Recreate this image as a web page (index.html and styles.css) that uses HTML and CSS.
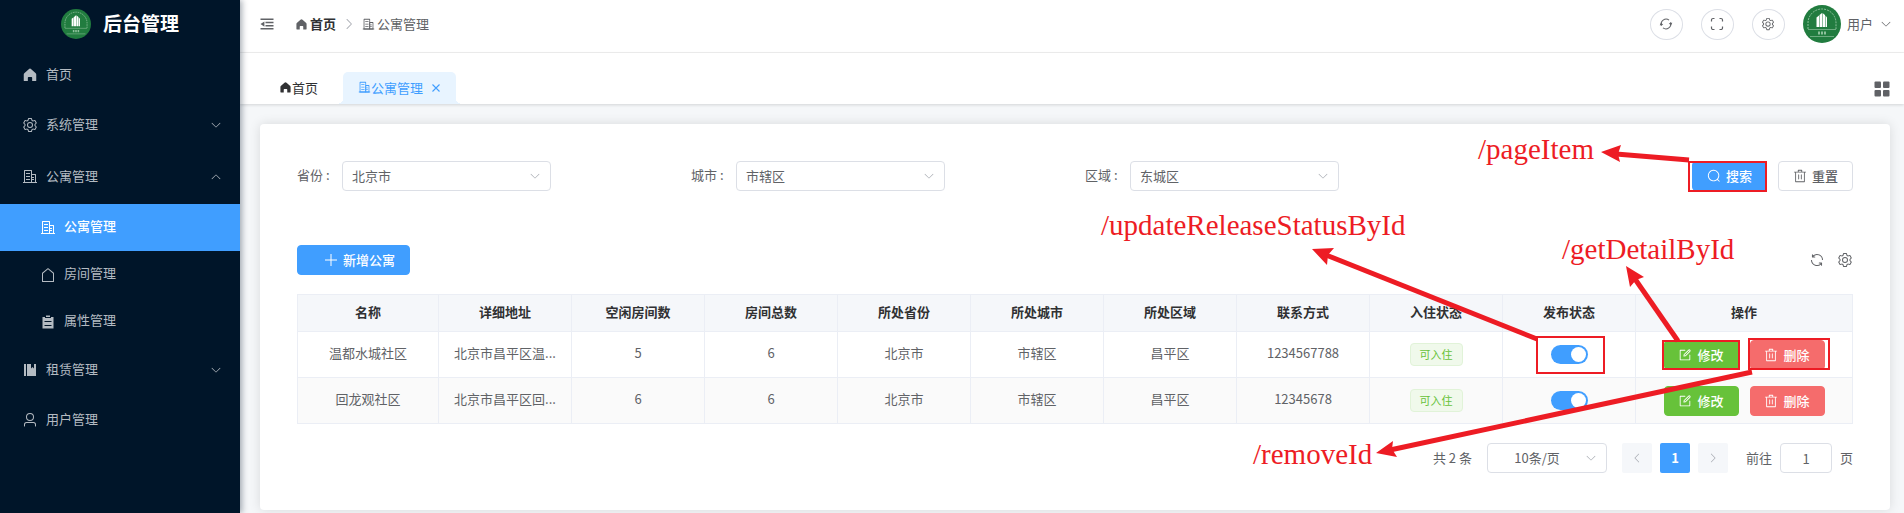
FILE: index.html
```html
<!DOCTYPE html>
<html lang="zh-CN">
<head>
<meta charset="utf-8">
<title>后台管理</title>
<link rel="stylesheet" href="styles.css">
</head>
<body>
<svg class="sprite" aria-hidden="true">
  <symbol id="i-home" viewBox="0 0 1024 1024"><path d="M512 96c30 0 50 14 80 40l270 240c34 32 50 60 50 100v388c0 22-12 36-36 36H650V680c0-30-16-46-46-46H420c-30 0-46 16-46 46v220H148c-24 0-36-14-36-36V476c0-40 16-68 50-100l270-240c30-26 50-40 80-40z"/></symbol>
  <symbol id="i-setting" viewBox="0 0 1024 1024"><path d="M600.704 64a32 32 0 0 1 30.464 22.208l35.2 109.376c14.784 7.232 28.928 15.36 42.432 24.512l112.384-24.192a32 32 0 0 1 34.432 15.36L944.32 364.8a32 32 0 0 1-4.032 37.504l-77.12 85.12a357.12 357.12 0 0 1 0 49.024l77.12 85.248a32 32 0 0 1 4.032 37.504l-88.704 153.6a32 32 0 0 1-34.432 15.296L708.8 803.904c-13.44 9.088-27.648 17.28-42.368 24.512l-35.264 109.376A32 32 0 0 1 600.704 960H423.296a32 32 0 0 1-30.464-22.208L357.696 828.48a351.616 351.616 0 0 1-42.56-24.64l-112.32 24.256a32 32 0 0 1-34.432-15.36L79.68 659.2a32 32 0 0 1 4.032-37.504l77.12-85.248a357.12 357.12 0 0 1 0-48.896l-77.12-85.248A32 32 0 0 1 79.68 364.8l88.704-153.6a32 32 0 0 1 34.432-15.296l112.32 24.256c13.568-9.152 27.776-17.408 42.56-24.64l35.2-109.312A32 32 0 0 1 423.232 64H600.64zm-23.424 64H446.72l-36.352 113.088-24.512 11.968a294.113 294.113 0 0 0-34.816 20.096l-22.656 15.36-116.224-25.088-65.28 113.152 79.68 88.192-1.92 27.136a293.12 293.12 0 0 0 0 40.192l1.92 27.136-79.808 88.192 65.344 113.152 116.224-25.024 22.656 15.296a294.113 294.113 0 0 0 34.816 20.096l24.512 11.968L446.72 896h130.688l36.48-113.152 24.448-11.904a288.282 288.282 0 0 0 34.752-20.096l22.592-15.296 116.288 25.024 65.28-113.152-79.744-88.192 1.92-27.136a293.12 293.12 0 0 0 0-40.256l-1.92-27.136 79.808-88.128-65.344-113.152-116.288 24.96-22.592-15.232a287.616 287.616 0 0 0-34.752-20.096l-24.448-11.904L577.344 128zM512 320a192 192 0 1 1 0 384 192 192 0 0 1 0-384zm0 64a128 128 0 1 0 0 256 128 128 0 0 0 0-256z"/></symbol>
  <symbol id="i-office" viewBox="0 0 1024 1024"><path d="M192 128v704h384V128H192zm-32-64h448a32 32 0 0 1 32 32v768a32 32 0 0 1-32 32H160a32 32 0 0 1-32-32V96a32 32 0 0 1 32-32z"/><path d="M256 256h256v64H256v-64zm0 192h256v64H256v-64zm0 192h256v64H256v-64zm384-128h128v64H640v-64zm0 128h128v64H640v-64zM64 832h896v64H64v-64z"/><path d="M640 384v448h192V384H640zm-32-64h256a32 32 0 0 1 32 32v512a32 32 0 0 1-32 32H608a32 32 0 0 1-32-32V352a32 32 0 0 1 32-32z"/></symbol>
  <symbol id="i-house" viewBox="0 0 1024 1024"><path d="M192 413.952V896h640V413.952L512 147.328 192 413.952zM139.52 374.4l352-293.312a32 32 0 0 1 40.96 0l352 293.312A32 32 0 0 1 896 398.976V928a32 32 0 0 1-32 32H160a32 32 0 0 1-32-32V398.976a32 32 0 0 1 11.52-24.576z"/></symbol>
  <symbol id="i-list" viewBox="0 0 1024 1024"><path d="M704 192h160v736H160V192h160v64h384v-64zM288 512h448v-64H288v64zm0 256h448v-64H288v64zm96-576V96h256v96H384z"/></symbol>
  <symbol id="i-book" viewBox="0 0 1024 1024"><path d="M576 128v288l96-96 96 96V128h128v768H320V128h256zm-448 0h128v768H128V128z"/></symbol>
  <symbol id="i-user" viewBox="0 0 1024 1024"><path d="M512 512a192 192 0 1 0 0-384 192 192 0 0 0 0 384zm0 64a256 256 0 1 1 0-512 256 256 0 0 1 0 512zm320 320v-96a96 96 0 0 0-96-96H288a96 96 0 0 0-96 96v96a32 32 0 1 1-64 0v-96a160 160 0 0 1 160-160h448a160 160 0 0 1 160 160v96a32 32 0 1 1-64 0z"/></symbol>
  <symbol id="i-down" viewBox="0 0 1024 1024"><path d="M831.872 340.864 512 652.672 192.128 340.864a30.592 30.592 0 0 0-42.752 0 29.12 29.12 0 0 0 0 41.6L489.664 714.24a32 32 0 0 0 44.672 0l340.288-331.712a29.12 29.12 0 0 0 0-41.728 30.592 30.592 0 0 0-42.752 0z"/></symbol>
  <symbol id="i-up" viewBox="0 0 1024 1024"><path transform="rotate(180 512 512)" d="M831.872 340.864 512 652.672 192.128 340.864a30.592 30.592 0 0 0-42.752 0 29.12 29.12 0 0 0 0 41.6L489.664 714.24a32 32 0 0 0 44.672 0l340.288-331.712a29.12 29.12 0 0 0 0-41.728 30.592 30.592 0 0 0-42.752 0z"/></symbol>
  <symbol id="i-right" viewBox="0 0 1024 1024"><path transform="rotate(-90 512 512)" d="M831.872 340.864 512 652.672 192.128 340.864a30.592 30.592 0 0 0-42.752 0 29.12 29.12 0 0 0 0 41.6L489.664 714.24a32 32 0 0 0 44.672 0l340.288-331.712a29.12 29.12 0 0 0 0-41.728 30.592 30.592 0 0 0-42.752 0z"/></symbol>
  <symbol id="i-left" viewBox="0 0 1024 1024"><path transform="rotate(90 512 512)" d="M831.872 340.864 512 652.672 192.128 340.864a30.592 30.592 0 0 0-42.752 0 29.12 29.12 0 0 0 0 41.6L489.664 714.24a32 32 0 0 0 44.672 0l340.288-331.712a29.12 29.12 0 0 0 0-41.728 30.592 30.592 0 0 0-42.752 0z"/></symbol>
  <symbol id="i-fold" viewBox="0 0 14 14"><path d="M.5 1.500h13v1.600H.5zM5.500 4.700h8v1.500h-8zM5.500 7.900h8v1.500h-8zM.5 11h13v1.600H.5zM4.400 4.500v5.200L.5 7.100z"/></symbol>
  <symbol id="i-sync" viewBox="0 0 16 16"><path fill="none" stroke="currentColor" stroke-width="1.200" d="M2.800 10A5.700 5.700 0 0 1 11.500 3.500M13.200 6A5.700 5.700 0 0 1 4.500 12.500"/><path d="M.8 9.500 2.400 6.400 4.800 9zM15.200 6.500 13.600 9.600 11.200 7z"/></symbol>
  <symbol id="i-full" viewBox="0 0 14 14"><path fill="none" stroke="currentColor" stroke-width="1.200" d="M1.500 4.500V3a1.500 1.500 0 0 1 1.500-1.500h1.500M9.500 1.500H11A1.500 1.500 0 0 1 12.500 3v1.500M12.500 9.500V11a1.500 1.500 0 0 1-1.500 1.500H9.500M4.500 12.500H3A1.500 1.500 0 0 1 1.500 11V9.500"/></symbol>
  <symbol id="i-refresh" viewBox="0 0 1024 1024"><path d="M771.776 794.88A384 384 0 0 1 128 512h64a320 320 0 0 0 555.712 216.448H654.72a32 32 0 1 1 0-64h149.056a32 32 0 0 1 32 32v148.928a32 32 0 1 1-64 0v-50.56zM276.288 295.616h92.992a32 32 0 0 1 0 64H220.16a32 32 0 0 1-32-32V178.56a32 32 0 0 1 64 0v50.56A384 384 0 0 1 896.128 512h-64a320 320 0 0 0-555.776-216.384z"/></symbol>
  <symbol id="i-search" viewBox="0 0 1024 1024"><path d="m795.904 750.72 124.992 124.928a32 32 0 0 1-45.248 45.248L750.656 795.904a416 416 0 1 1 45.248-45.248zM480 832a352 352 0 1 0 0-704 352 352 0 0 0 0 704z"/></symbol>
  <symbol id="i-delete" viewBox="0 0 1024 1024"><path d="M160 256H96a32 32 0 0 1 0-64h256V95.936a32 32 0 0 1 32-32h256a32 32 0 0 1 32 32V192h256a32 32 0 1 1 0 64h-64v672a32 32 0 0 1-32 32H192a32 32 0 0 1-32-32V256zm448-64v-64H416v64h192zM224 896h576V256H224v640zm192-128a32 32 0 0 1-32-32V416a32 32 0 0 1 64 0v320a32 32 0 0 1-32 32zm192 0a32 32 0 0 1-32-32V416a32 32 0 0 1 64 0v320a32 32 0 0 1-32 32z"/></symbol>
  <symbol id="i-edit" viewBox="0 0 1024 1024"><path d="M832 512a32 32 0 1 1 64 0v352a32 32 0 0 1-32 32H160a32 32 0 0 1-32-32V160a32 32 0 0 1 32-32h352a32 32 0 0 1 0 64H192v640h640V512z"/><path d="m469.952 554.24 52.8-7.552L847.104 222.4a32 32 0 1 0-45.248-45.248L477.44 501.44l-7.552 52.8zm422.4-422.4a96 96 0 0 1 0 135.808l-331.84 331.84a32 32 0 0 1-18.112 9.088L436.8 623.68a32 32 0 0 1-36.224-36.224l15.104-105.6a32 32 0 0 1 9.024-18.112l331.904-331.84a96 96 0 0 1 135.744 0z"/></symbol>
  <symbol id="i-plus" viewBox="0 0 14 14"><path fill="none" stroke="currentColor" d="M7 1v12M1 7h12"/></symbol>
  <symbol id="i-close" viewBox="0 0 10 10"><path fill="none" stroke="currentColor" stroke-width="1.100" d="M1.500 1.500l7 7M8.500 1.500l-7 7"/></symbol>
  <symbol id="i-grid" viewBox="0 0 16 16"><rect x=".5" y=".5" width="6.500" height="6.500" rx="1"/><rect x="9" y=".5" width="6.500" height="6.500" rx="1"/><rect x=".5" y="9" width="6.500" height="6.500" rx="1"/><rect x="9" y="9" width="6.500" height="6.500" rx="1"/></symbol>
  <symbol id="i-logo" viewBox="0 0 38 38"><circle cx="19" cy="19" r="19" fill="#217c3f"/><path fill="none" stroke="#a9d0b4" stroke-width=".8" d="M5 24V18a14 14 0 0 1 28 0v6" stroke-dasharray="2 1"/><path stroke="#8dc09b" stroke-width=".7" d="M5 24.500h28M7 31.500h24"/><path fill="#fff" d="M13.500 12.500 16 10.500V22h-2.500zM16.500 10 19 8v14h-2.500zM19.500 8 22 10v12h-2.500zM22.500 10.500 24 12.500V22h-1.500z"/><path stroke="#8dc09b" stroke-width="3" stroke-dasharray="2 1" d="M15 28h8"/></symbol>
</svg>

<div class="layout">
  <aside class="sidebar">
    <div class="brand"><svg class="brand-logo"><use href="#i-logo"/></svg><h1>后台管理</h1></div>
    <nav class="menu">
      <a class="menu-item" href="#"><svg class="icon-lg"><use href="#i-home"/></svg><span>首页</span></a>
      <a class="menu-item" href="#"><svg class="icon-lg"><use href="#i-setting"/></svg><span>系统管理</span><svg class="arrow"><use href="#i-down"/></svg></a>
      <a class="menu-item menu-open" href="#"><svg class="icon-lg"><use href="#i-office"/></svg><span>公寓管理</span><svg class="arrow"><use href="#i-up"/></svg></a>
      <a class="menu-item menu-sub active" href="#"><svg class="icon-lg"><use href="#i-office"/></svg><span>公寓管理</span></a>
      <a class="menu-item menu-sub" href="#"><svg class="icon-lg"><use href="#i-house"/></svg><span>房间管理</span></a>
      <a class="menu-item menu-sub" href="#"><svg class="icon-lg"><use href="#i-list"/></svg><span>属性管理</span></a>
      <a class="menu-item" href="#"><svg class="icon-lg"><use href="#i-book"/></svg><span>租赁管理</span><svg class="arrow"><use href="#i-down"/></svg></a>
      <a class="menu-item" href="#"><svg class="icon-lg"><use href="#i-user"/></svg><span>用户管理</span></a>
    </nav>
  </aside>

  <div class="content">
    <header class="topbar">
      <button class="plain fold" aria-label="折叠菜单"><svg class="icon"><use href="#i-fold"/></svg></button>
      <nav class="crumbs">
        <a class="crumb crumb-home" href="#"><svg class="icon-sm"><use href="#i-home"/></svg><span>首页</span></a>
        <svg class="crumb-sep"><use href="#i-right"/></svg>
        <span class="crumb"><svg class="icon-sm"><use href="#i-office"/></svg>公寓管理</span>
      </nav>
      <div class="tools">
        <button class="round" aria-label="刷新"><svg class="icon"><use href="#i-sync"/></svg></button>
        <button class="round" aria-label="全屏"><svg class="icon"><use href="#i-full"/></svg></button>
        <button class="round" aria-label="设置"><svg class="icon"><use href="#i-setting"/></svg></button>
      </div>
      <button class="plain account"><svg class="avatar"><use href="#i-logo"/></svg><span>用户</span><svg class="arrow"><use href="#i-down"/></svg></button>
    </header>

    <div class="tabs">
      <a class="tab" href="#"><svg class="tab-icon"><use href="#i-home"/></svg>首页</a>
      <a class="tab tab-active" href="#"><svg class="tab-icon"><use href="#i-office"/></svg>公寓管理<svg class="tab-close"><use href="#i-close"/></svg></a>
      <button class="plain tabs-more" aria-label="更多"><svg class="grid-icon"><use href="#i-grid"/></svg></button>
    </div>

    <main class="card">
      <form class="filters">
        <div class="field"><label for="province">省份 :</label><div class="select"><select id="province"><option>北京市</option></select><svg class="arrow"><use href="#i-down"/></svg></div></div>
        <div class="field"><label for="city">城市 :</label><div class="select"><select id="city"><option>市辖区</option></select><svg class="arrow"><use href="#i-down"/></svg></div></div>
        <div class="field"><label for="district">区域 :</label><div class="select"><select id="district"><option>东城区</option></select><svg class="arrow"><use href="#i-down"/></svg></div></div>
        <div class="filter-actions">
          <button type="button" class="btn btn-primary"><svg class="icon"><use href="#i-search"/></svg>搜索</button>
          <button type="button" class="btn"><svg class="icon"><use href="#i-delete"/></svg>重置</button>
        </div>
      </form>

      <div class="toolbar">
        <button class="btn btn-primary btn-add"><svg class="icon"><use href="#i-plus"/></svg>新增公寓</button>
        <div class="toolbar-icons">
          <button class="plain" aria-label="刷新表格"><svg class="icon-lg"><use href="#i-refresh"/></svg></button>
          <button class="plain" aria-label="列设置"><svg class="icon-lg"><use href="#i-setting"/></svg></button>
        </div>
      </div>

      <table class="table">
        <colgroup><col class="col-name"><col span="9" class="col-data"><col class="col-actions"></colgroup>
        <thead><tr><th>名称</th><th>详细地址</th><th>空闲房间数</th><th>房间总数</th><th>所处省份</th><th>所处城市</th><th>所处区域</th><th>联系方式</th><th>入住状态</th><th>发布状态</th><th>操作</th></tr></thead>
        <tbody>
          <tr><td>温都水城社区</td><td>北京市昌平区温...</td><td>5</td><td>6</td><td>北京市</td><td>市辖区</td><td>昌平区</td><td>1234567788</td><td class="cell-control"><span class="tag">可入住</span></td><td class="cell-control"><input type="checkbox" class="switch" aria-label="发布状态" checked></td>
            <td class="cell-control"><div class="row-actions"><button class="btn btn-success"><svg class="icon"><use href="#i-edit"/></svg>修改</button><button class="btn btn-danger"><svg class="icon"><use href="#i-delete"/></svg>删除</button></div></td></tr>
          <tr><td>回龙观社区</td><td>北京市昌平区回...</td><td>6</td><td>6</td><td>北京市</td><td>市辖区</td><td>昌平区</td><td>12345678</td><td class="cell-control"><span class="tag">可入住</span></td><td class="cell-control"><input type="checkbox" class="switch" aria-label="发布状态" checked></td>
            <td class="cell-control"><div class="row-actions"><button class="btn btn-success"><svg class="icon"><use href="#i-edit"/></svg>修改</button><button class="btn btn-danger"><svg class="icon"><use href="#i-delete"/></svg>删除</button></div></td></tr>
        </tbody>
      </table>

      <div class="pagination">
        <span>共 2 条</span>
        <div class="select page-size"><select aria-label="每页条数"><option>10条/页</option></select><svg class="arrow"><use href="#i-down"/></svg></div>
        <div class="pager">
          <button class="page" disabled aria-label="上一页"><svg class="arrow"><use href="#i-left"/></svg></button>
          <button class="page page-current">1</button>
          <button class="page" disabled aria-label="下一页"><svg class="arrow"><use href="#i-right"/></svg></button>
        </div>
        <label class="jumper">前往<input type="text" value="1">页</label>
      </div>
    </main>
  </div>

  <svg class="notes" width="840" height="513" viewBox="1064 0 840 513">
    <g class="note-box">
      <rect x="1689" y="162" width="77" height="29"/>
      <rect x="1537" y="337" width="67" height="36"/>
      <rect x="1663" y="341" width="76" height="28"/>
      <rect x="1749" y="339" width="80" height="30"/>
    </g>
    <g class="note-line">
      <path d="M1689 160 1616 154"/>
      <path d="M1537 339 1326 255"/>
      <path d="M1678 341 1635 279"/>
      <path d="M1752 372 1390 450"/>
    </g>
    <g class="note-head">
      <path d="M1601 152 1621 145 1618 154 1620 162z"/>
      <path d="M1312 249 1334 248 1328 255 1327 265z"/>
      <path d="M1626 266 1644 277 1636 280 1630 287z"/>
      <path d="M1376 453 1393 441 1392 449 1397 457z"/>
    </g>
    <g class="note-text">
      <text x="1478" y="159">/pageItem</text>
      <text x="1101" y="235">/updateReleaseStatusById</text>
      <text x="1562" y="259">/getDetailById</text>
      <text x="1253" y="464">/removeId</text>
    </g>
  </svg>
</div>
</body>
</html>
```
FILE: styles.css
```css
* { box-sizing: border-box; }
body {
  margin: 0;
  font: 13px/20px "Noto Sans CJK SC", sans-serif;
  color: #606266;
  background: #f5f7f9;
}
a { color: inherit; text-decoration: none; }
button, select, input { font: inherit; color: inherit; margin: 0; }
svg { fill: currentColor; flex: none; display: block; }
.sprite { position: absolute; width: 0; height: 0; }
.icon { width: 14px; height: 14px; }
.icon-sm { width: 13px; height: 13px; }
.icon-lg { width: 16px; height: 16px; }
.arrow { width: 12px; height: 12px; }
.plain { border: 0; padding: 0; background: none; display: flex; align-items: center; }

.layout { position: relative; display: flex; min-height: 100vh; }

/* Sidebar */
.sidebar {
  width: 240px;
  flex: none;
  background: #001529;
  color: #b4bbc2;
  box-shadow: 2px 0 6px rgba(0, 21, 41, .35);
  z-index: 1;
}
.brand { display: flex; align-items: center; justify-content: center; gap: 12px; height: 48px; }
.brand-logo { width: 30px; height: 30px; }
.brand h1 { margin: 0; padding-bottom: 2px; font-size: 19px; line-height: 28px; font-weight: 700; color: #fff; }
.menu { padding-top: 2px; }
.menu-item { display: flex; align-items: center; gap: 8px; height: 50px; padding: 0 18px 0 22px; }
.menu-item span { padding-bottom: 3px; }
.menu-item .arrow { margin-left: auto; }
.menu-open { height: 54px; }
.menu-sub { height: 47px; padding-left: 40px; }
.menu-item.active { background: #409eff; color: #fff; font-weight: 500; }

/* Header */
.content { flex: 1; min-width: 0; display: flex; flex-direction: column; }
.topbar { display: flex; align-items: center; height: 53px; padding: 0 12px 4px 20px; background: #fff; border-bottom: 1px solid #f0f0f0; }
.crumbs { display: flex; align-items: center; gap: 6px; margin-left: 21px; }
.crumb { display: flex; align-items: center; gap: 2px; }
.crumb-home { color: #606266; }
.crumb-home span { color: #303133; font-weight: 700; }
.crumb-sep { width: 14px; height: 14px; color: #a8abb2; }
.tools { display: flex; gap: 18px; margin-left: auto; }
.round { display: flex; align-items: center; justify-content: center; width: 33px; height: 31px; padding: 0; border: 1px solid #dcdfe6; border-radius: 50%; background: #fff; }
.account { gap: 6px; margin-left: 18px; }
.account .arrow { margin-left: 1px; }
.avatar { width: 38px; height: 38px; }

/* Tabs */
.tabs { display: flex; align-items: flex-end; height: 51px; padding: 0 14px 0 24px; background: #fff; box-shadow: 0 1px 3px rgba(0, 0, 0, .14); }
.tab { position: relative; display: flex; align-items: center; height: 32px; padding: 0 15px 1px; color: #303133; }
.tab-icon { width: 13px; height: 13px; }
.tab-active { margin-left: 10px; color: #409eff; background: #e8f4ff; border-radius: 5px 5px 0 0; }
.tab-active::before, .tab-active::after { content: ""; position: absolute; bottom: 0; width: 4px; height: 5px; }
.tab-active::before { right: 100%; background: radial-gradient(circle at 0 0, transparent 4px, #e8f4ff 4px); }
.tab-active::after { left: 100%; background: radial-gradient(circle at 100% 0, transparent 4px, #e8f4ff 4px); }
.tab-close { width: 10px; height: 10px; margin-left: 8px; }
.tabs-more { margin-left: auto; height: 30px; }
.grid-icon { width: 16px; height: 16px; }

/* Card */
.card { margin: 20px 14px 3px 20px; padding: 37px; flex: 1; background: #fff; border-radius: 4px; box-shadow: 0 0 12px rgba(0, 0, 0, .12); }
.filters { display: grid; grid-template-columns: repeat(4, 1fr); gap: 20px; }
.field { display: flex; align-items: center; }
.field label { width: 45px; padding-bottom: 2px; }
.select { position: relative; width: 209px; height: 30px; }
.select select { width: 100%; height: 100%; padding: 0 30px 0 9px; border: 1px solid #dcdfe6; border-radius: 4px; background: #fff; appearance: none; }
.select .arrow { position: absolute; right: 10px; top: 9px; color: #a8abb2; pointer-events: none; }
.filter-actions { display: flex; justify-content: flex-end; gap: 11px; }

.btn { display: inline-flex; align-items: center; justify-content: center; gap: 5px; width: 75px; height: 30px; padding: 0; border: 1px solid #dcdfe6; border-radius: 4px; background: #fff; font-weight: 500; }
.btn-primary { border-color: #409eff; background: #409eff; color: #fff; }
.btn-success { border-color: #67c23a; background: #67c23a; color: #fff; }
.btn-danger { border-color: #f56c6c; background: #f56c6c; color: #fff; }
.btn-add { width: 113px; padding-left: 12px; }

.toolbar { display: flex; align-items: center; justify-content: space-between; margin: 54px 0 19px; }
.toolbar-icons { display: flex; gap: 12px; }

.table { width: 100%; table-layout: fixed; border-collapse: collapse; text-align: center; }
.col-name { width: 141px; }
.col-data { width: 133px; }
.col-actions { width: 217px; }
.table th, .table td { padding: 0 8px 3px; border: 1px solid #ebeef5; overflow: hidden; white-space: nowrap; }
.table th { height: 37px; background: #f5f7fa; color: #303133; font-weight: 700; }
.table td { height: 46px; }
.table .cell-control { padding-bottom: 0; }
.table tbody tr:nth-child(even) { background: #fafafa; }
.tag { display: inline-block; height: 23px; padding: 0 9px; border: 1px solid #e1f3d8; border-radius: 4px; background: #f0f9eb; color: #67c23a; font-size: 11px; line-height: 21px; vertical-align: middle; }
.switch { appearance: none; display: block; width: 37px; height: 19px; margin: 0 auto; padding: 2px; border-radius: 10px; background: #c0c4cc; }
.switch::before { content: ""; display: block; width: 15px; height: 15px; border-radius: 50%; background: #fff; }
.switch:checked { background: #409eff; }
.switch:checked::before { margin-left: auto; }
.row-actions { display: flex; justify-content: center; gap: 11px; }

.pagination { display: flex; align-items: center; justify-content: flex-end; gap: 15px; margin-top: 19px; }
.page-size { width: 120px; }
.page-size select { text-align: center; text-align-last: center; padding: 0 20px 0 0; }
.pager { display: flex; gap: 8px; }
.page { display: flex; align-items: center; justify-content: center; width: 30px; height: 30px; padding: 0; border: 0; border-radius: 2px; background: #f5f7fa; color: #a8abb2; }
.page-current { background: #409eff; color: #fff; font-weight: 700; }
.jumper { display: flex; align-items: center; gap: 8px; margin-left: 3px; }
.jumper input { width: 52px; height: 30px; padding: 0; border: 1px solid #dcdfe6; border-radius: 4px; text-align: center; }

/* API notes drawn over the page */
.notes { position: absolute; top: 0; right: 0; z-index: 2; pointer-events: none; }
.note-box { fill: none; stroke: #ed1c24; stroke-width: 2; }
.note-line { fill: none; stroke: #ed1c24; stroke-width: 5; }
.note-head { fill: #ed1c24; }
.note-text { fill: #ed1c24; font: 29px "Liberation Serif", serif; }
```
